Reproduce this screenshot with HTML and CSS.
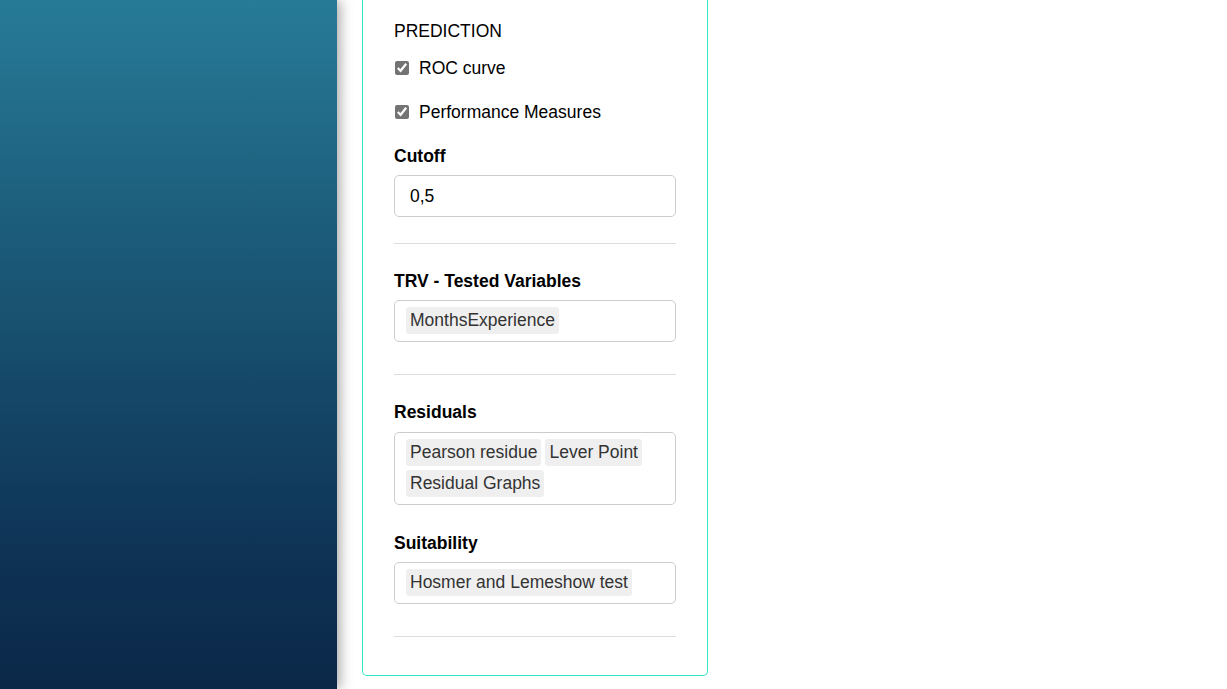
FILE: index.html
```html
<!DOCTYPE html>
<html lang="en">
<head>
<meta charset="utf-8">
<title>Prediction options</title>
<link rel="stylesheet" href="styles.css">
</head>
<body>
<div class="layout">
  <aside class="sidebar"></aside>
  <main class="main">
    <section class="panel">
      <div class="section-title">PREDICTION</div>
      <label class="check first"><input type="checkbox" checked><span>ROC curve</span></label>
      <label class="check"><input type="checkbox" checked><span>Performance Measures</span></label>

      <div class="field after-checks">
        <div class="field-label">Cutoff</div>
        <input class="text-input" type="text" value="0,5">
      </div>
      <hr class="divider after-input">

      <div class="field after-hr">
        <div class="field-label">TRV - Tested Variables</div>
        <div class="tags"><span class="tag">MonthsExperience</span></div>
      </div>
      <hr class="divider after-tags">

      <div class="field after-hr">
        <div class="field-label wide">Residuals</div>
        <div class="tags"><span class="tag">Pearson residue</span><span class="tag">Lever Point</span><span class="tag">Residual Graphs</span></div>
      </div>

      <div class="field after-field">
        <div class="field-label">Suitability</div>
        <div class="tags"><span class="tag">Hosmer and Lemeshow test</span></div>
      </div>
      <hr class="divider after-tags">
    </section>
  </main>
</div>
</body>
</html>
```

FILE: styles.css
```css
* { box-sizing: border-box; }
html, body { margin: 0; padding: 0; }
body {
  font-family: "Liberation Sans", Arial, sans-serif;
  font-size: 17.5px;
  color: #000;
  background: #fff;
}
.layout {
  display: flex;
  height: 689px;
  overflow: hidden;
}
.sidebar {
  width: 337px;
  flex: 0 0 337px;
  height: 100%;
  background: linear-gradient(to bottom, #277b97 0%, #1a5675 40%, #0e3355 80%, #0b2848 100%);
  box-shadow: 3px 0 12px rgba(0, 0, 0, 0.35);
  position: relative;
  z-index: 1;
}
.main {
  flex: 1;
  padding-left: 25px;
}
.panel {
  width: 346px;
  border: 1px solid #30e6c8;
  border-top: none;
  border-radius: 0 0 5px 5px;
  padding: 21px 31px 38px 31px;
}
.section-title {
  line-height: 20px;
  height: 20px;
}
.check {
  display: flex;
  align-items: center;
  height: 20px;
  line-height: 20px;
  margin-top: 24px;
}
.check.first { margin-top: 17px; }
.check input {
  width: 14px;
  height: 14px;
  margin: 0 10px 0 1px;
  accent-color: #747474;
}
.field-label {
  font-weight: bold;
  line-height: 20px;
  height: 20px;
  margin-bottom: 9px;
}
.field-label.wide { margin-bottom: 10px; }
.after-checks { margin-top: 24px; }
.after-hr { margin-top: 27px; }
.after-field { margin-top: 28px; }
.text-input {
  display: block;
  width: 282px;
  height: 42px;
  border: 1px solid #cccccc;
  border-radius: 5px;
  padding: 0 15px;
  font-family: inherit;
  font-size: 17.5px;
  color: #000;
  outline: none;
}
.divider {
  border: none;
  border-top: 1px solid #dddddd;
  margin: 0;
  height: 0;
}
.after-input { margin-top: 26px; }
.after-tags { margin-top: 32px; }
.tags {
  display: flex;
  flex-wrap: wrap;
  align-content: flex-start;
  gap: 4px 4px;
  width: 282px;
  min-height: 42px;
  border: 1px solid #cccccc;
  border-radius: 5px;
  padding: 6px 11px 7px 11px;
}
.tag {
  background: #efefef;
  color: #333;
  border-radius: 3px;
  padding: 3px 4px;
  line-height: 21px;
  height: 27px;
  white-space: nowrap;
}
```
